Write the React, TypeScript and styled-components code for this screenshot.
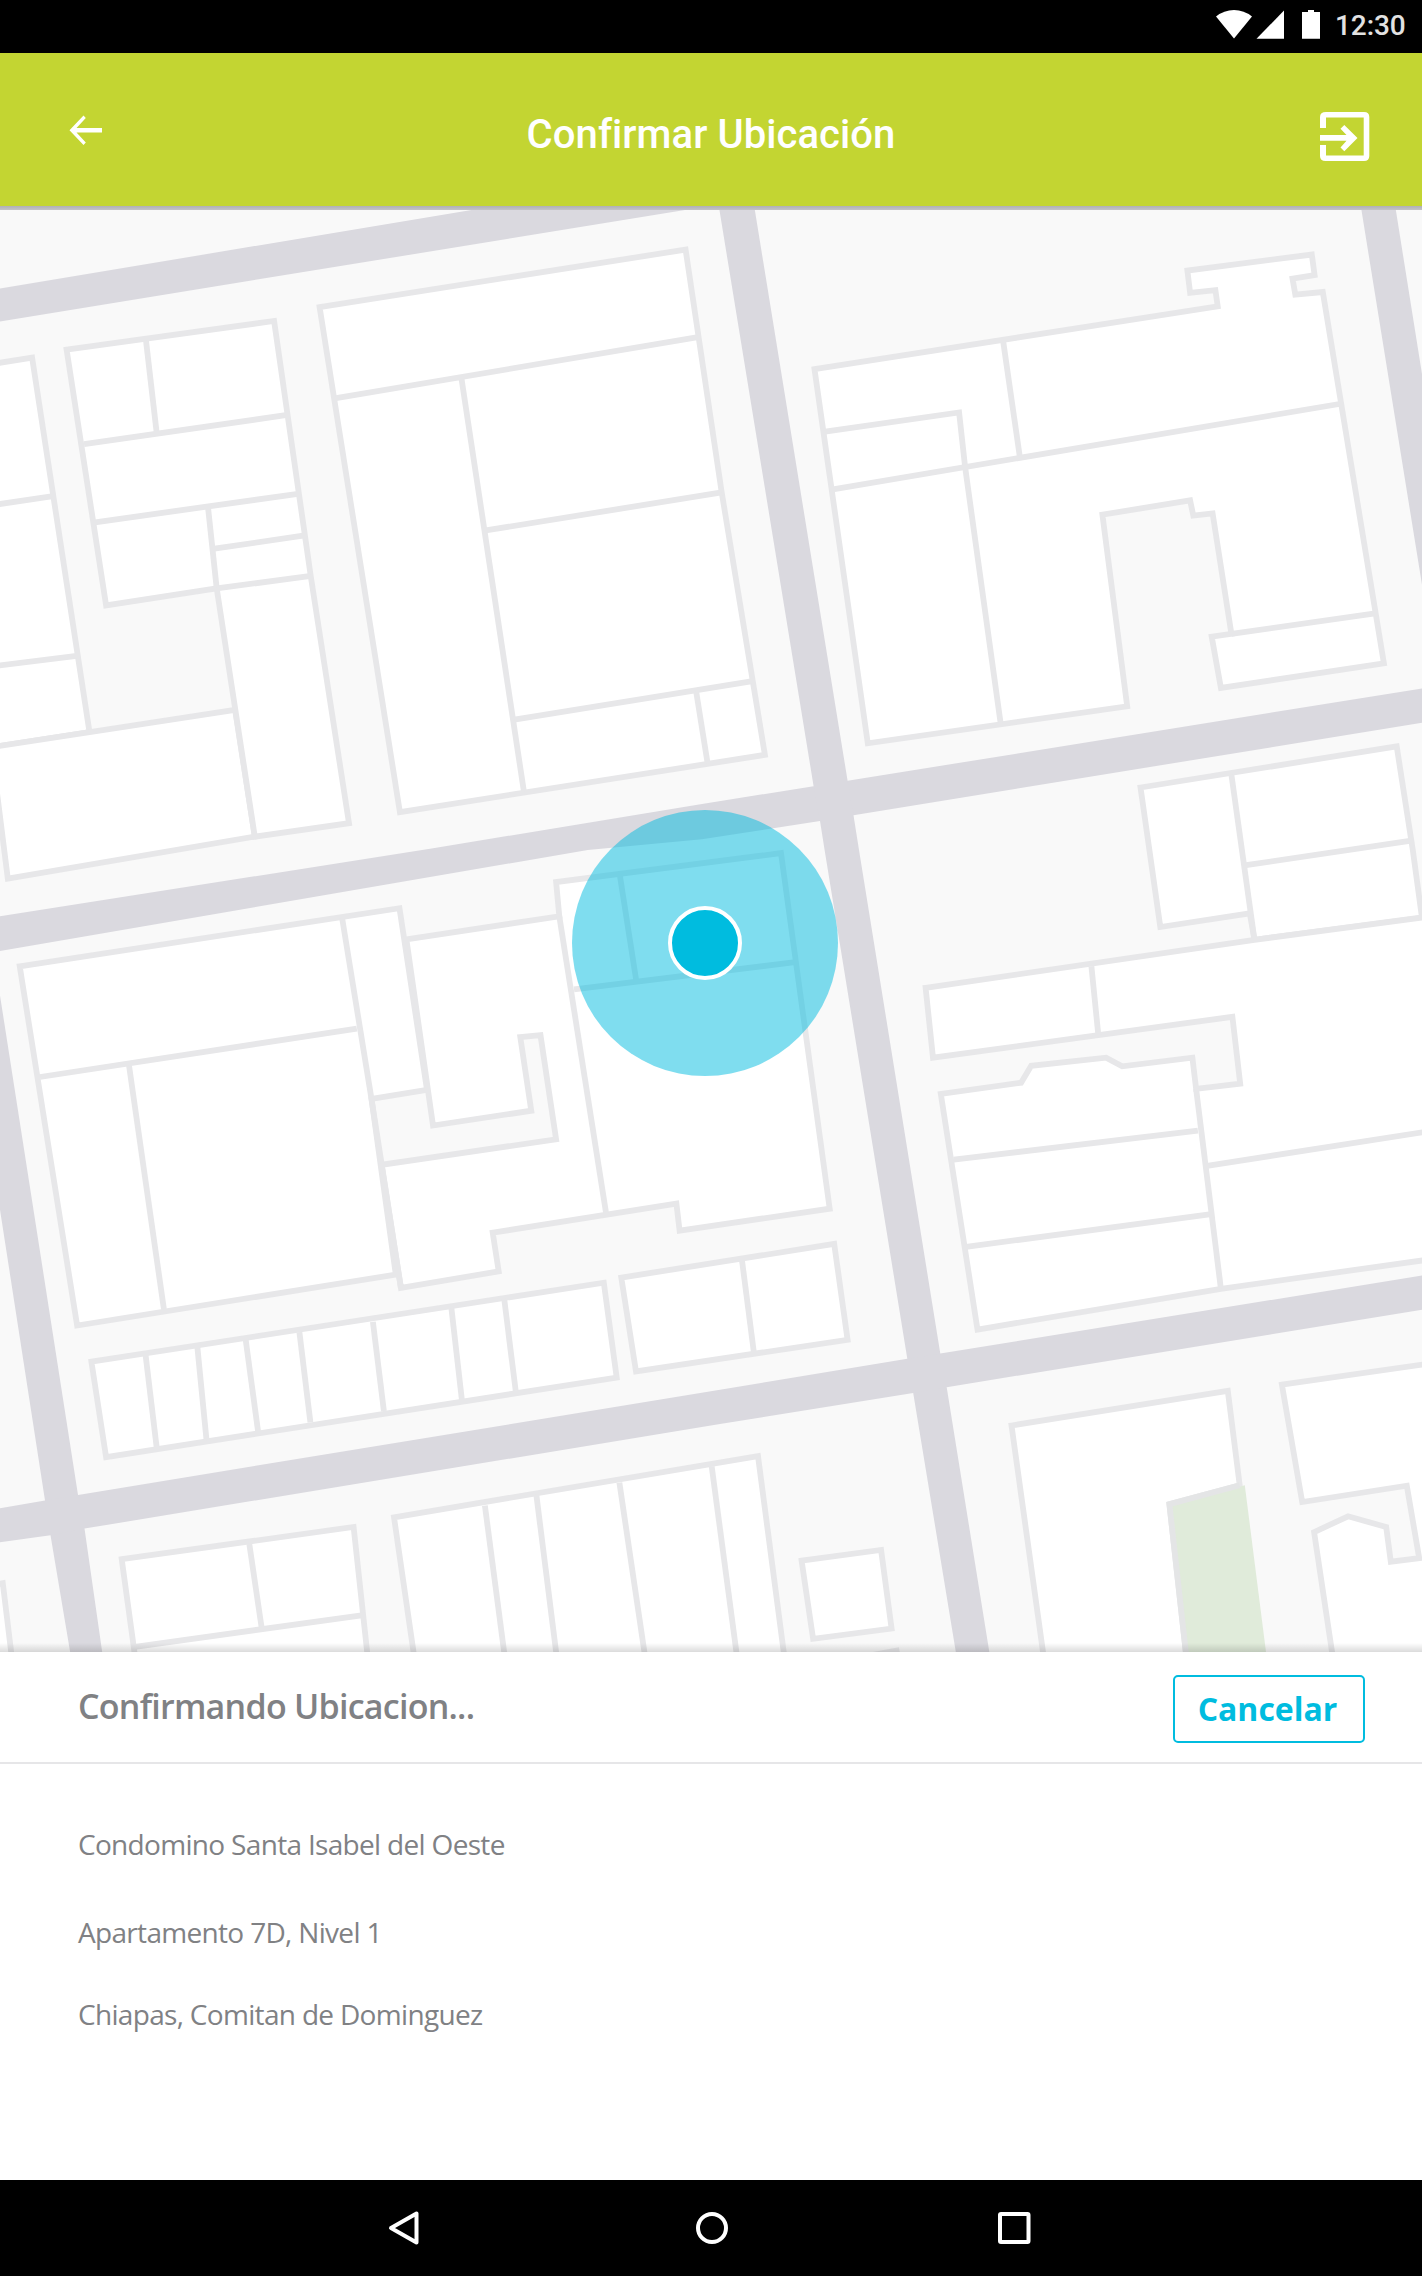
import React from 'react';
import styled, { createGlobalStyle } from 'styled-components';

const GlobalStyle = createGlobalStyle`
  *, *::before, *::after { box-sizing: border-box; }
  body { margin: 0; background: #fff; }
  h1, h2, p { margin: 0; font-weight: inherit; }
`;

const cyan = '#00bcdf';
const lime = '#c3d532';

const Screen = styled.div`
  display: flex;
  flex-direction: column;
  width: 1422px;
  height: 2276px;
  overflow: hidden;
  background: #fff;
  font-family: 'Open Sans', sans-serif;
`;

const StatusBar = styled.div`
  display: flex;
  flex: none;
  justify-content: flex-end;
  height: 53px;
  padding-right: 16px;
  background: #000;
`;

const StatusIcons = styled.svg`
  flex: none;
  width: 120px;
  height: 53px;
`;

const Clock = styled.span`
  width: 71px;
  font: 500 28px/51px Roboto, sans-serif;
  letter-spacing: -0.1px;
  color: #e2e2e2;
  white-space: nowrap;
`;

const AppBar = styled.header`
  position: relative;
  z-index: 1;
  display: grid;
  grid-template-columns: 1fr auto 1fr;
  flex: none;
  align-items: center;
  height: 153px;
  padding: 9px 50px 0;
  background: ${lime};

  &::after {
    content: '';
    position: absolute;
    top: 100%;
    left: 0;
    right: 0;
    height: 4px;
    background: linear-gradient(#b0b0b4, #c4c4c7);
  }
`;

const Title = styled.h1`
  padding-top: 2px;
  font: 500 40px/50px Roboto, sans-serif;
  letter-spacing: 0.08px;
  color: #fff;
  white-space: nowrap;
`;

const IconButton = styled.button<{ $end?: boolean }>`
  display: flex;
  justify-self: ${(p) => (p.$end ? 'end' : 'start')};
  margin: ${(p) => (p.$end ? '5px 0 0' : '0 0 1px 16px')};
  padding: 0;
  border: 0;
  background: none;
  color: #fff;
  svg { display: block; fill: currentColor; }
`;

const MapArea = styled.main`
  position: relative;
  flex: 1;
  min-height: 0;
  overflow: hidden;
  background: #f9f9f9;

  &::after {
    content: '';
    position: absolute;
    left: 0;
    right: 0;
    bottom: 0;
    height: 9px;
    background: linear-gradient(rgba(0, 0, 0, 0), rgba(0, 0, 0, 0.14));
  }
`;

const MapDrawing = styled.svg`
  display: block;
  width: 1422px;
  height: 1446px;
`;

const Accuracy = styled.div`
  position: absolute;
  left: 572px;
  top: 603.5px;
  display: grid;
  place-items: center;
  width: 266px;
  height: 266px;
  border-radius: 50%;
  background: rgba(0, 188, 223, 0.5);
`;

const Dot = styled.div`
  width: 74px;
  height: 74px;
  border: 4px solid #fff;
  border-radius: 50%;
  background: ${cyan};
`;

const Sheet = styled.section`
  flex: none;
  height: 528px;
  background: #fff;
  color: #808184;
`;

const SheetHeader = styled.div`
  display: flex;
  align-items: flex-start;
  justify-content: space-between;
  height: 112px;
  padding: 23px 57px 0 78px;
  border-bottom: 2px solid #e6e6e8;
`;

const SheetTitle = styled.h2`
  font-size: 34px;
  font-weight: 600;
  line-height: 62px;
  letter-spacing: -0.74px;
`;

const CancelButton = styled.button`
  width: 192px;
  height: 68px;
  padding: 0 3px 0 0;
  border: 2px solid ${cyan};
  border-radius: 5px;
  background: #fff;
  color: ${cyan};
  font: 700 32px/64px 'Open Sans', sans-serif;
`;

const Address = styled.div`
  display: flex;
  flex-direction: column;
  padding: 60px 78px 0;
`;

const AddressLine = styled.p<{ $gap?: number }>`
  margin-top: ${(p) => p.$gap ?? 0}px;
  font-size: 28px;
  font-weight: 400;
  line-height: 40px;
  letter-spacing: -0.68px;
  white-space: nowrap;
`;

const NavBar = styled.nav`
  display: flex;
  flex: none;
  justify-content: center;
  height: 96px;
  background: #000;
`;

const NavIcons = styled.svg`
  width: 720px;
  height: 96px;
`;

/* ---- Street map data: four survey tiles, each on a 1568-unit grid ---- */

type Plot = (points: string) => string;

const tile =
  (left: number, top: number, width: number, height: number): Plot =>
  (points) =>
    points
      .trim()
      .split(/\s+/)
      .map((pair) => {
        const [x, y] = pair.split(',').map(Number);
        return `${(left + (x * width) / 1568).toFixed(1)},${(top + (y * height) / 1568).toFixed(1)}`;
      })
      .join(' ') + ' ';

const nw = tile(0, 200, 720, 700);
const ne = tile(702, 200, 720, 700);
const sw = tile(0, 850, 720, 800);
const se = tile(702, 850, 720, 800);

const roads = [
  nw('-20,201 0,198 1030,22 1090,10 1560,10 1495,22 0,272 -20,275'),
  sw('0,130 940,-3') + ne('0,1353 243,1313 317,1301 1568,1094 1568,1171 330,1378 257,1391 0,1432') + sw('1280,0 0,198'),
  ne('35,0 38,22 243,1313 257,1391') + se('267,0 447,997 460,1064 552,1568 560,1612 633,1612 625,1568 533,1053 519,987 342,0') + ne('330,1378 317,1301 115,22 112,0'),
  ne('1433,0 1436,22 1568,862 1568,390 1511,22 1508,0'),
  sw('0,705 98,1275 110,1343 152,1568 160,1612 229,1612 222,1568 184,1330 170,1265 0,285'),
  sw('0,1290 98,1275 170,1264 1568,1058') + se('447,997 519,987 1568,834 1568,901 533,1053 460,1064') + sw('1568,1125 184,1330 110,1343 0,1357'),
];

const buildings = [
  nw('-20,368 70,353 195,1192 -20,1226'),
  nw('-20,1226 512,1142 555,1426 17,1520 -5,1340'),
  nw('145,335 597,271 677,845 760,1396 555,1426 472,870 231,908'),
  nw('696,240 1493,111') + ne('43,655 137,1243') + nw('871,1371'),
  ne('245,379 1123,238 1118,202 1063,208 1057,158 1328,122 1334,168 1286,176 1292,212 1352,206 1485,1038 1130,1093 1110,978 1153,972 1112,702 1070,707 1063,673 872,705 926,1134 361,1217'),
  ne('955,1316 1513,1224') + se('1548,0 1568,133 1203,176 1193,124 998,151'),
  se('487,270 1203,176 1620,126 1620,798 1130,860 600,940 520,478 695,456 717,423 880,407 915,424 1068,407 1076,468 1172,458 1155,327 503,407'),
  sw('43,228 870,114 930,470 809,488 862,832 168,932'),
  sw('885,175 1218,130 1211,63') + se('172,6 278,703') + sw('1480,746 1473,693 1073,750 1086,826 873,858 831,617 1211,567 1177,363 1133,367 1157,511 943,540'),
  sw('199,1003 1315,848 1343,1034 231,1190'),
  sw('1353,838') + se('288,772 317,960') + sw('1385,1022'),
  sw('265,1390 770,1327 803,1600 297,1600'),
  sw('858,1308') + se('122,1188 182,1600') + sw('905,1600'),
  se('217,1393 390,1372 413,1526 242,1546'),
  se('674,1128 1145,1060 1171,1245 1018,1282 1057,1600 747,1600'),
  se('1263,1048 1620,1002 1620,1620 1380,1620 1333,1337 1407,1306 1490,1327 1500,1395 1562,1388 1535,1246 1307,1278'),
  sw('-10,1440 6,1437 28,1600 -10,1600'),
];

const walls = [
  nw('-20,684 112,664'), nw('-20,1045 167,1021'),
  nw('318,315 341,520'), nw('183,547 622,482'), nw('207,722 649,658'),
  nw('453,688 472,870'), nw('467,781 660,752'), nw('472,870 677,842'),
  nw('732,444 1520,307'), nw('1005,400 1141,1325'),
  nw('1058,740') + ne('43,655'), nw('1120,1164') + ne('107,1078'), nw('1516,1100 1541,1262'),
  ne('656,317 692,575'), ne('268,519 560,476 573,598 650,1170'),
  ne('285,648 1388,457'), ne('1153,972 1466,926'),
  ne('1153,1287') + se('1203,175'), ne('1185,1490 1545,1435'),
  se('848,228 863,362'), se('1076,468 1130,860'), se('548,607 1080,550'),
  se('1100,619 1600,549'), se('575,778 1105,714'),
  sw('87,445 777,350'), sw('281,422 357,900'), sw('745,133 809,488 873,858'),
  sw('1218,130 1320,712'), sw('1350,50 1386,258'), sw('1250,273') + se('203,220'),
  sw('317,990 341,1170'), sw('430,975 450,1158'), sw('535,960 562,1140'),
  sw('652,945 676,1122'), sw('812,925 836,1100'), sw('983,898 1006,1078'), sw('1098,880 1123,1060'),
  se('87,803 113,985'),
  sw('543,1360 570,1525'), sw('294,1562 795,1499'),
  sw('1056,1285 1102,1600'), sw('1168,1263 1215,1600'), sw('1349,1240 1408,1600'),
  sw('1550,1208') + se('79,1600'),
  se('370,1578 430,1568'),
];

const park = se('1018,1282 1171,1248 1182,1245 1234,1612 1058,1612');

const StreetMap = () => (
  <MapDrawing viewBox="0 206 1422 1446" aria-hidden="true">
    <g fill="#dad9df">
      {roads.map((points) => <polygon key={points} points={points} />)}
    </g>
    <g fill="#fff" stroke="#e7e7e9" strokeWidth="5.8">
      {buildings.map((points) => <polygon key={points} points={points} />)}
      {walls.map((points) => <polyline key={points} points={points} fill="none" />)}
    </g>
    <polygon points={park} fill="#e0ebda" />
    <polyline points={se('1171,1245 1018,1282 1057,1600')} fill="none" stroke="#e4e5e6" strokeWidth="5.8" />
  </MapDrawing>
);

export default function App() {
  return (
    <Screen>
      <GlobalStyle />
      <StatusBar>
        <StatusIcons viewBox="1215 0 120 53" fill="#fff" aria-hidden="true">
          <path d="M1216 16.5Q1224 10 1234 10T1252 16.5L1234 38.5Z" />
          <path d="M1284 10.500V38.800H1256.500Z" />
          <path d="M1302 12H1308V10H1314V12H1320V38.800H1302Z" />
        </StatusIcons>
        <Clock>12:30</Clock>
      </StatusBar>

      <AppBar>
        <IconButton aria-label="Volver">
          <svg width="40" height="40" viewBox="0 0 40 40">
            <path d="M36 14H10.500L19.800 4.100L17.500 1.500L3.500 16.200L17.500 31L19.800 28.400L10.500 18.500H36Z" />
          </svg>
        </IconButton>
        <Title>Confirmar Ubicación</Title>
        <IconButton $end aria-label="Salir">
          <svg width="52" height="52" viewBox="0 0 52 52">
            <path d="M6 1H44Q49.300 1 49.300 6V45Q49.300 50 44 50H5.500Q0 50 0 45V34H6V44.500H43.700V6.500H6V17H0V6Q0 1 6 1Z" />
            <path d="M0 24H26.500L20.500 17.700L24.300 14L37.500 27L24.300 40.200L20.500 36.500L26.500 29.800H0Z" />
          </svg>
        </IconButton>
      </AppBar>

      <MapArea>
        <StreetMap />
        <Accuracy><Dot /></Accuracy>
      </MapArea>

      <Sheet>
        <SheetHeader>
          <SheetTitle>Confirmando Ubicacion...</SheetTitle>
          <CancelButton>Cancelar</CancelButton>
        </SheetHeader>
        <Address>
          <AddressLine>Condomino Santa Isabel del Oeste</AddressLine>
          <AddressLine $gap={48}>Apartamento 7D, Nivel 1</AddressLine>
          <AddressLine $gap={42}>Chiapas, Comitan de Dominguez</AddressLine>
        </Address>
      </Sheet>

      <NavBar>
        <NavIcons viewBox="351 2180 720 96" fill="none" stroke="#fff" strokeWidth="4" aria-hidden="true">
          <path d="M416.500 2213.500V2242.500L391 2228Z" strokeLinejoin="round" />
          <circle cx="712" cy="2228" r="14" />
          <rect x="1000" y="2214" width="28.5" height="28" rx="1" />
        </NavIcons>
      </NavBar>
    </Screen>
  );
}
